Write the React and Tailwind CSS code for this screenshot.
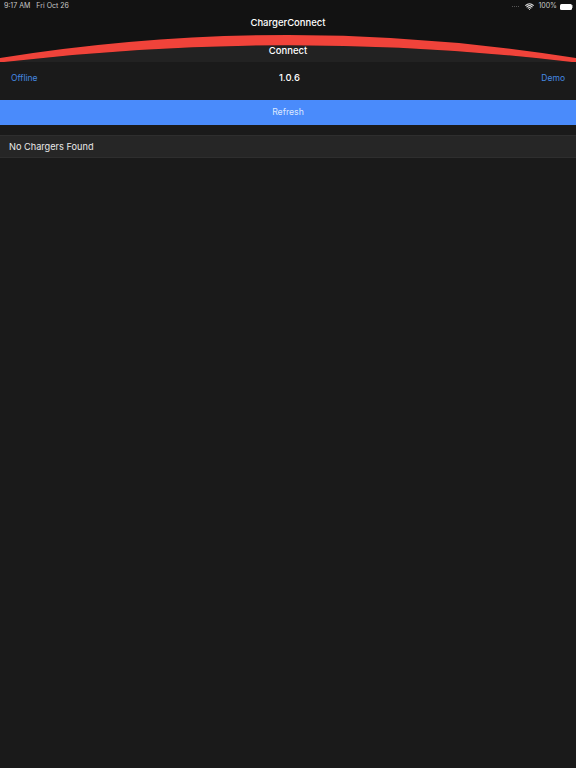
import { Wifi } from "lucide-react";

function StatusBar() {
  return (
    <div className="h-[12px] mt-[0.5px] flex items-center justify-between pl-1 pr-[3px] text-[7px] text-[#c8c8c8]">
      <div className="flex gap-[6px]">
        <span>9:17 AM</span>
        <span>Fri Oct 26</span>
      </div>
      <div className="flex items-center gap-[3px]">
        {/* Signal dots */}
        <div className="flex gap-[1px] mr-[3px]">
          <div className="w-[1px] h-[1px] bg-[#555]" />
          <div className="w-[1px] h-[1px] bg-[#555]" />
          <div className="w-[1px] h-[1px] bg-[#555]" />
          <div className="w-[1px] h-[1px] bg-[#555]" />
        </div>
        <Wifi size={9} strokeWidth={3} className="text-[#e5e5e5]" />
        <span className="ml-[1px]">100%</span>
        {/* Battery */}
        <div className="flex items-center">
          <div className="w-[12px] h-[6px] rounded-[1.5px] bg-white" />
          <div className="w-[1px] h-[3px] bg-[#777]" />
        </div>
      </div>
    </div>
  );
}

function Header() {
  return (
    <header className="relative h-[62px] bg-[#121212] overflow-hidden">
      <StatusBar />
      <div className="h-[22px] flex items-center justify-center text-[9.5px] font-medium text-white">
        ChargerConnect
      </div>

      {/* Arc */}
      <svg className="absolute inset-0" width="576" height="62" viewBox="0 0 576 62">
        <path d="M0 62.5 Q288 28 576 62.5 L576 62 L0 62 Z" fill="#222222" />
        <path d="M0 58 Q288 12 576 58 L576 62.5 Q288 28 0 62.5 Z" fill="#f0433a" />
      </svg>

      <div className="absolute top-[42px] left-0 right-0 h-[18px] flex items-center justify-center text-[9.5px] font-medium text-white">
        Connect
      </div>
    </header>
  );
}

export default function App() {
  return (
    <div className="w-[576px] h-[768px] overflow-hidden bg-[#1a1a1a] font-['Inter',sans-serif]">
      <Header />

      {/* Mode row */}
      <div className="h-[30px] flex items-center justify-between px-[11px] text-[8.5px] mt-[1px]">
        <span className="text-[#4488e0]">Offline</span>
        <span className="text-white text-[9.5px] font-medium">1.0.6</span>
        <span className="text-[#4488e0]">Demo</span>
      </div>

      <div className="mt-[7px] h-[25px] pt-[1px] bg-[#4a8bfb] flex items-center justify-center text-[8.7px] text-[#dbe8ff]">
        Refresh
      </div>

      <div className="mt-[10px] h-[23px] bg-[#262626] border-y border-[#2e2e2e] flex items-center px-[9px] text-[9.2px] text-[#e8e8e8]">
        No Chargers Found
      </div>
    </div>
  );
}
